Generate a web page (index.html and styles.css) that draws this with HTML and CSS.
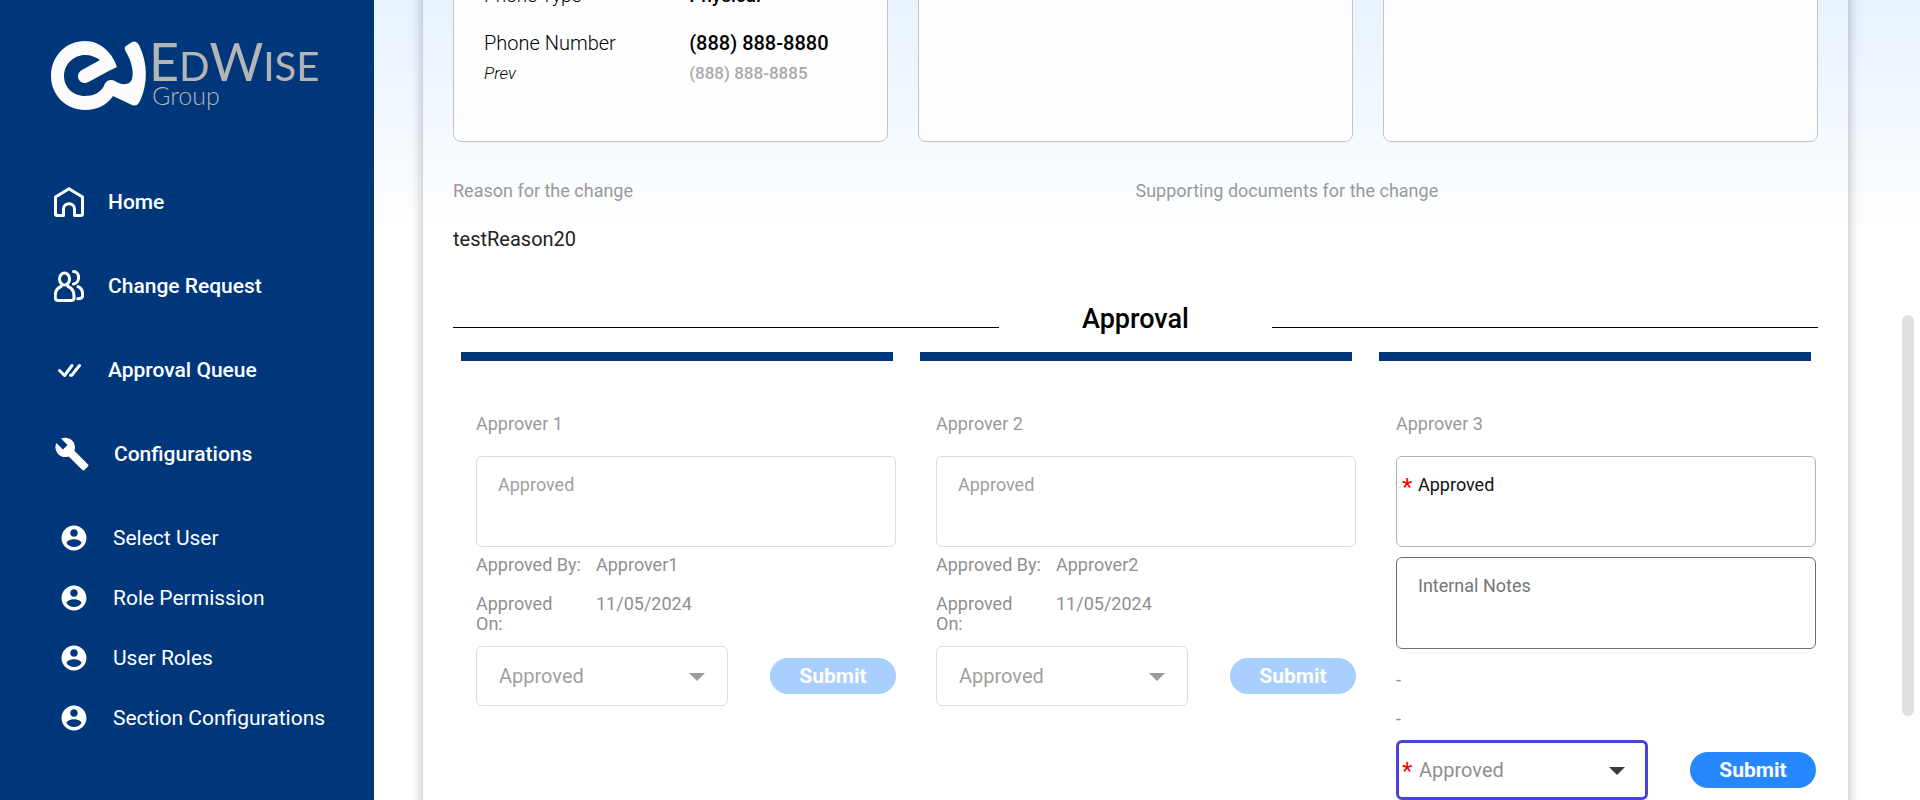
FILE: index.html
```html
<!DOCTYPE html>
<html lang="en">
<head>
<meta charset="utf-8">
<title>EdWise Group - Change Request</title>
<link rel="stylesheet" href="styles.css">
</head>
<body>
<svg class="defs" aria-hidden="true">
  <symbol id="user" viewBox="0 0 24 24"><path d="M12 2C6.48 2 2 6.48 2 12s4.480 10 10 10 10-4.480 10-10S17.520 2 12 2zm0 3c1.660 0 3 1.340 3 3s-1.340 3-3 3-3-1.340-3-3 1.340-3 3-3zm0 14.200c-2.500 0-4.710-1.280-6-3.220.030-1.990 4-3.080 6-3.080 1.990 0 5.970 1.090 6 3.080-1.290 1.940-3.500 3.220-6 3.220z"/></symbol>
  <symbol id="arrow" viewBox="0 0 16 8"><path d="M0 0h16L8 8z"/></symbol>
</svg>
<div class="shell">
  <aside class="sidebar">
    <svg class="logo" viewBox="0 0 280 76" role="img" aria-label="EdWise Group">
      <path class="mark" d="M67 27C62 12 50 1 35 1C16 1 1 16 1 36C1 55 16 70 35 70C47 70 57 65 63 56L82 65Q87 67 90 61C98 44 98 23 89 5Q86 0 82 2L76 6Q74 7 75 10C82 22 84 32 82 39C80 46 70 45 65 41C59 38 55 42 54 46C50 53 43 56 35 56C23 56 14 47 14 36C14 24 24 15 35 15C41 15 46 17 50 20L32 30C25 34 28 43 35 43C39 43 44 38 67 27Z"/>
      <text class="logo-name" x="99" y="41">E<tspan class="logo-small">D</tspan>W<tspan class="logo-small">ISE</tspan></text>
      <text class="logo-sub" x="102" y="65">Group</text>
    </svg>
    <nav>
      <ul class="menu">
        <li><a class="menu-link" href="#"><svg class="icon line" viewBox="0 0 30 30"><path d="M1.500 10L15 1.700l13.500 8.300V27q0 1.500-1.500 1.500h-6.500V22c0-7-11-7-11 0v6.500H3Q1.500 28.500 1.500 27z"/></svg>Home</a></li>
        <li><a class="menu-link" href="#"><svg class="icon tall line" viewBox="0 0 30 32"><ellipse cx="10.500" cy="9" rx="5" ry="6"/><path d="M7 16.500C3 18 1.200 21 1.200 26v1.500Q1.200 30.500 4.500 30.500h12.500Q20 30.500 20 27.500V26c0-5-2-8-6-9.500M19.500 1.500c6.800 0 6.800 11.800 0 12.500M24 16.700c3.500 1.300 4.700 4.800 4.700 8.300 0 3-2 3.700-5 3.700"/></svg>Change Request</a></li>
        <li><a class="menu-link" href="#"><svg class="icon line" viewBox="0 0 30 30"><path d="M5.500 15.500l5 5L18 10.500M16.500 20.300h1.200L25.500 10.500"/></svg>Approval Queue</a></li>
        <li><a class="menu-link" href="#"><svg class="icon big" viewBox="0 0 24 24"><path d="M22.700 19l-9.100-9.100c.9-2.300.4-5-1.500-6.900-2-2-5-2.400-7.400-1.300L9 6 6 9 1.600 4.700C.4 7.100.9 10.100 2.900 12.100c1.900 1.900 4.600 2.400 6.900 1.500l9.100 9.100c.4.400 1 .4 1.400 0l2.300-2.300c.5-.4.5-1.100.1-1.400z"/></svg>Configurations</a></li>
      </ul>
      <ul class="menu submenu">
        <li><a class="sub-link" href="#"><svg class="icon"><use href="#user"/></svg>Select User</a></li>
        <li><a class="sub-link" href="#"><svg class="icon"><use href="#user"/></svg>Role Permission</a></li>
        <li><a class="sub-link" href="#"><svg class="icon"><use href="#user"/></svg>User Roles</a></li>
        <li><a class="sub-link" href="#"><svg class="icon"><use href="#user"/></svg>Section Configurations</a></li>
      </ul>
    </nav>
  </aside>

  <main class="main">
    <div class="panel">
      <section class="cards">
        <div class="card">
          <dl class="facts">
            <dt>Phone Type</dt><dd>Physical</dd>
            <dt class="spaced">Phone Number</dt><dd class="spaced">(888) 888-8880</dd>
            <dt class="prev">Prev</dt><dd class="prev">(888) 888-8885</dd>
          </dl>
        </div>
        <div class="card"></div>
        <div class="card"></div>
      </section>

      <section class="details">
        <div>
          <p class="caption">Reason for the change</p>
          <p class="value">testReason20</p>
        </div>
        <div>
          <p class="caption">Supporting documents for the change</p>
        </div>
      </section>

      <div class="divider"><h2>Approval</h2></div>
      <div class="bars"><span></span><span></span><span></span></div>

      <section class="approvers">
        <form class="approver">
          <label class="caption" for="note1">Approver 1</label>
          <textarea id="note1" class="note" disabled>Approved</textarea>
          <dl class="meta">
            <dt>Approved By:</dt><dd>Approver1</dd>
            <dt>Approved On:</dt><dd>11/05/2024</dd>
          </dl>
          <div class="actions">
            <div class="picker"><select aria-label="Approver 1 status" disabled><option>Approved</option></select><svg class="arrow"><use href="#arrow"/></svg></div>
            <button class="submit" type="button" disabled>Submit</button>
          </div>
        </form>
        <form class="approver">
          <label class="caption" for="note2">Approver 2</label>
          <textarea id="note2" class="note" disabled>Approved</textarea>
          <dl class="meta">
            <dt>Approved By:</dt><dd>Approver2</dd>
            <dt>Approved On:</dt><dd>11/05/2024</dd>
          </dl>
          <div class="actions">
            <div class="picker"><select aria-label="Approver 2 status" disabled><option>Approved</option></select><svg class="arrow"><use href="#arrow"/></svg></div>
            <button class="submit" type="button" disabled>Submit</button>
          </div>
        </form>
        <form class="approver">
          <label class="caption" for="note3">Approver 3</label>
          <div class="required"><textarea id="note3" class="note">Approved</textarea></div>
          <textarea class="note internal" aria-label="Internal Notes" placeholder="Internal Notes"></textarea>
          <div class="meta pending"><span>-</span><span>-</span></div>
          <div class="actions">
            <div class="picker active required"><select aria-label="Approver 3 status"><option>Approved</option></select><svg class="arrow"><use href="#arrow"/></svg></div>
            <button class="submit" type="button">Submit</button>
          </div>
        </form>
      </section>
    </div>
    <div class="scroll-thumb"></div>
  </main>
</div>
</body>
</html>
```
FILE: styles.css
```css
* { box-sizing: border-box; }
body {
  margin: 0;
  font-family: Roboto, "Liberation Sans", sans-serif;
  font-size: 18px;
  line-height: 20px;
  color: #000;
}
ul, dl, dd, p, h2 { margin: 0; padding: 0; }
ul { list-style: none; }
textarea, select, button { font-family: inherit; margin: 0; }
.defs { display: none; }
.shell { display: grid; grid-template-columns: 374px 1fr; height: 100vh; overflow: hidden; }

/* Sidebar */
.sidebar { background: #00377b; padding: 40px 0 0 50px; overflow: hidden; }
.logo { display: block; width: 280px; height: 76px; margin-bottom: 65px; overflow: visible; }
.mark { fill: #fcfcfc; }
.logo-name, .logo-sub { font-family: Lato, sans-serif; fill: #b5b5b5; }
.logo-name { font-size: 52px; font-weight: 400; }
.logo-small { font-size: 40px; }
.logo-sub { font-size: 25px; font-weight: 300; }
.menu-link, .sub-link { display: flex; align-items: center; color: #fff; text-decoration: none; font-size: 21px; gap: 24px; }
.menu-link { height: 42px; margin-bottom: 42px; padding-left: 4px; font-weight: 500; }
.icon { flex: none; width: 30px; height: 30px; fill: #fff; }
.icon.line { fill: none; stroke: #fff; stroke-width: 3; stroke-linejoin: round; stroke-linecap: round; }
.icon.tall { height: 32px; }
.icon.big { width: 36px; height: 36px; }
.submenu { margin-top: -9px; }
.sub-link { height: 60px; padding-left: 9px; }

/* Content */
.main {
  position: relative;
  padding: 0 72px 0 49px;
  background: linear-gradient(#e7f3ff, #f2f8ff 110px, #fff 235px);
  overflow: hidden;
}
.panel { min-height: 110vh; padding: 0 30px; box-shadow: 0 0 12px rgba(0, 0, 0, 0.3); }
.cards { display: grid; grid-template-columns: repeat(3, 1fr); gap: 30px; margin-top: -48px; }
.card { height: 190px; background: #fefefe; border: 1px solid #c4c4c4; border-radius: 8px; padding: 31px 30px; }
.facts { display: grid; grid-template-columns: 11fr 9fr; font-size: 19px; line-height: 24px; }
.facts dt { font-weight: 300; }
.facts dd { font-weight: 500; }
.facts .spaced { margin-top: 23px; font-size: 20px; }
.facts .prev { font-size: 17px; margin-top: 6px; }
dt.prev { font-style: italic; }
dd.prev { color: #aaa; }
.details { display: grid; grid-template-columns: 1fr 1fr; padding-top: 37px; line-height: 24px; }
.caption { color: #999; font-size: 18px; line-height: 24px; }
.value { margin-top: 24px; font-size: 20px; color: #222; }
.divider { display: grid; grid-template-columns: 2fr 1fr 2fr; align-items: end; margin-top: 51px; }
.divider::before, .divider::after { content: ""; border-bottom: 1px solid #000; margin-bottom: 8px; }
.divider h2 { font-size: 27px; font-weight: 500; line-height: 34px; text-align: center; }
.bars { display: grid; grid-template-columns: repeat(3, 1fr); gap: 27px; padding: 0 7px 0 8px; margin-top: 16px; }
.bars span { height: 9px; background: #00377b; }

/* Approvers */
.approvers { display: grid; grid-template-columns: repeat(3, 1fr); gap: 40px; padding: 51px 2px 0 23px; }
.approver .caption { display: block; margin-bottom: 20px; }
.note {
  display: block;
  width: 100%;
  height: 91px;
  padding: 17px 21px;
  border: 1px solid #b5b5b5;
  border-radius: 6px;
  background: #fff;
  color: #111;
  font-size: 18px;
  line-height: 21px;
  resize: none;
}
.note:disabled { border-color: #dedede; color: #9f9f9f; }
.internal { height: 92px; margin-top: 10px; border-color: #707070; }
.internal::placeholder { color: #757575; }
.meta { display: grid; grid-template-columns: 105px 1fr; column-gap: 15px; row-gap: 19px; margin: 8px 0 12px; color: #8f8f8f; }
.pending { grid-template-columns: 1fr; margin: 21px 0 11px; }
.actions { display: flex; align-items: center; justify-content: space-between; }
.picker { position: relative; width: 60%; }
.picker select {
  display: block;
  width: 100%;
  height: 60px;
  padding: 0 22px;
  appearance: none;
  border: 1px solid #dedede;
  border-radius: 6px;
  background: #fff;
  color: #9f9f9f;
  font-size: 20px;
  opacity: 1;
}
.picker.active select { border: 3px solid #4742d8; padding: 0 20px; color: #8f8f8f; outline: none; }
.arrow { position: absolute; right: 23px; top: 27px; width: 16px; height: 8px; fill: #9a9a9a; pointer-events: none; }
.active .arrow { fill: #3c3c3c; }
.required { position: relative; }
.required::before { content: "*"; position: absolute; left: 6px; top: 19px; color: #f00; font-size: 24px; line-height: 24px; }
.submit { width: 30%; height: 36px; border: 0; border-radius: 18px; background: #2688ff; color: #fff; font-size: 21px; font-weight: 700; }
.submit:disabled { background: #a8cfff; }

.scroll-thumb { position: absolute; right: 6px; top: 315px; width: 12px; height: 401px; border-radius: 6px; background: #e0e0e0; }
```
